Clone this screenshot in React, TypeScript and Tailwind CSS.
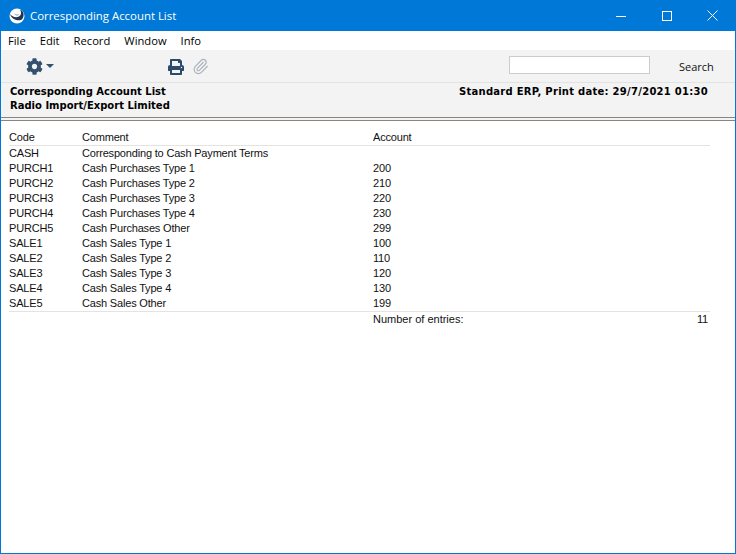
import { Paperclip } from 'lucide-react';
import { FaCog, FaPrint } from 'react-icons/fa';

const rows = [
  ['CASH', 'Corresponding to Cash Payment Terms', ''],
  ['PURCH1', 'Cash Purchases Type 1', '200'],
  ['PURCH2', 'Cash Purchases Type 2', '210'],
  ['PURCH3', 'Cash Purchases Type 3', '220'],
  ['PURCH4', 'Cash Purchases Type 4', '230'],
  ['PURCH5', 'Cash Purchases Other', '299'],
  ['SALE1', 'Cash Sales Type 1', '100'],
  ['SALE2', 'Cash Sales Type 2', '110'],
  ['SALE3', 'Cash Sales Type 3', '120'],
  ['SALE4', 'Cash Sales Type 4', '130'],
  ['SALE5', 'Cash Sales Other', '199'],
];

const menus = ['File', 'Edit', 'Record', 'Window', 'Info'];

function AppLogo() {
  return (
    <svg width="16" height="16" viewBox="0 0 16 16">
      <circle cx="8" cy="8" r="7.5" fill="#fff" />
      <path d="M1 6 C2 10 7 13.5 12 12 C14 11 15 8 14.5 5.5 C14 3.5 12.5 2 11 1.5 C12.5 4 12.5 7 10 8.5 C7 10 3 9 1 6Z" fill="#1f3550" />
      <path d="M5 5 C6.5 7 9 7.5 10.5 6 C9.5 7.8 6.5 8 5 5Z" fill="#1f3550" />
    </svg>
  );
}

export default function App() {
  return (
    <div className="w-[736px] h-[554px] flex flex-col bg-white border-x border-b border-[#0078d7] [font-family:Liberation_Sans,sans-serif] text-[11px] tracking-[-0.18px] text-[#111] overflow-hidden">
      {/* Title bar */}
      <div className="h-[31px] shrink-0 bg-[#0078d7] flex items-center text-white pl-[8px]">
        <AppLogo />
        <span className="ml-[5px] [font-family:Open_Sans,sans-serif] tracking-normal text-[11.4px] flex-1">Corresponding Account List</span>
        <div className="flex items-center">
          <div className="w-[46px] flex justify-center">
            <svg width="10" height="10" viewBox="0 0 10 10"><path d="M0 5.5H10" stroke="#fff" /></svg>
          </div>
          <div className="w-[46px] flex justify-center">
            <svg width="10" height="10" viewBox="0 0 10 10"><rect x=".5" y=".5" width="9" height="9" fill="none" stroke="#fff" /></svg>
          </div>
          <div className="w-[45px] flex justify-center">
            <svg width="11" height="11" viewBox="0 0 11 11"><path d="M.5.5L10.5 10.5M10.5.5L.5 10.5" stroke="#fff" /></svg>
          </div>
        </div>
      </div>

      {/* Menu */}
      <div className="h-[19px] shrink-0 flex items-center gap-[14px] pl-[7px] pt-[1px] [font-family:Open_Sans,sans-serif] tracking-normal text-[11.2px] text-black">
        {menus.map(m => (
          <span key={m}>{m}</span>
        ))}
      </div>

      {/* Toolbar */}
      <div className="h-[33px] shrink-0 bg-[#f3f3f3] border-b border-[#e3e3e3] flex items-center">
        <div className="ml-[25px] flex items-center w-[142px]">
          <FaCog className="w-[17px] h-[17px] text-[#33506f]" />
          <span className="ml-[3px] w-0 h-0 border-x-[4px] border-x-transparent border-t-[4px] border-t-[#33506f]" />
        </div>
        <FaPrint className="w-[16px] h-[16px] mt-[1px] text-[#2c4a6b]" />
        <Paperclip className="ml-[8px] w-[17px] h-[17px] text-[#a9b3bd]" strokeWidth={1.6} />
        <input className="ml-[300px] mb-[2px] w-[141px] h-[18px] bg-white border border-[#cccccc]" />
        <span className="ml-[29px] mt-[2px] [font-family:Open_Sans,sans-serif] tracking-normal text-[11px]">Search</span>
      </div>

      {/* Report header */}
      <div className="h-[38px] shrink-0 bg-[#f3f3f3] border-b-4 border-double border-[#8a8480] [font-family:DejaVu_Sans,sans-serif] font-bold text-[10px] tracking-normal leading-[14px] text-black pl-[9px] pr-[27px] pt-[2px]">
        <div className="flex justify-between">
          <span>Corresponding Account List</span>
          <span className="tracking-[0.27px]">Standard ERP, Print date: 29/7/2021 01:30</span>
        </div>
        <div>Radio Import/Export Limited</div>
      </div>

      {/* Report */}
      <div className="pl-[8px] pt-[9px] w-[709px]">
        <div className="flex h-[14px] items-center border-b border-[#e6e2de] box-content pb-[1px]">
          <span className="w-[73px]">Code</span>
          <span className="w-[291px]">Comment</span>
          <span>Account</span>
        </div>
        {rows.map(r => (
          <div key={r[0]} className="flex h-[15px] items-center">
            <span className="w-[73px]">{r[0]}</span>
            <span className="w-[291px]">{r[1]}</span>
            <span>{r[2]}</span>
          </div>
        ))}
        <div className="flex h-[16px] items-center border-t border-[#e6e2de] pr-[2px]">
          <span className="ml-[364px] flex-1 tracking-normal">Number of entries:</span>
          <span>11</span>
        </div>
      </div>
    </div>
  );
}
